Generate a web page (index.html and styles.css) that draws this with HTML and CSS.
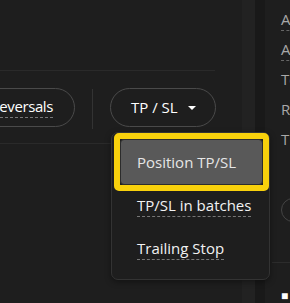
FILE: index.html
```html
<!DOCTYPE html>
<html lang="en">
<head>
    <meta charset="UTF-8">
    <meta name="viewport" content="width=device-width, initial-scale=1.0">
    <title>TP / SL</title>
    <link rel="stylesheet" href="styles.css">
</head>
<body>
    <div class="main">
        <div class="chart"></div>
        <div class="toolbar">
            <button class="pill pill_rev"><span class="dash">Reversals</span></button>
            <span class="vline"></span>
            <button class="pill pill_tpsl">TP / SL<span class="caret"></span></button>
        </div>

        <!-- 드롭다운 메뉴 -->
        <div class="menu">
            <div class="mark">
                <div class="item on">Position TP/SL</div>
            </div>
            <div class="item"><span class="dash">TP/SL in batches</span></div>
            <div class="item"><span class="dash">Trailing Stop</span></div>
        </div>
    </div>
    <div class="scroll"></div>
    <div class="gutter"></div>
    <div class="side">
        <ul class="info">
            <li><span class="dash">Avbl</span></li>
            <li><span class="dash">Assets</span></li>
            <li>Total</li>
            <li>Risk</li>
            <li>TP/SL</li>
        </ul>
        <div class="radio"></div>
        <div class="sline"></div>
        <div class="bottom">■</div>
    </div>
</body>
</html>
```

FILE: styles.css
```css
*{ margin: 0; padding: 0; box-sizing: border-box;}
ol,ul,li{ list-style: none;}

body{ width: 290px; height: 303px; overflow: hidden; display: flex; background-color: #1e1e1e; font-family: "Open Sans", "Noto Sans", sans-serif; color: #f0f0f0;}

.main{ width: 242px; flex-shrink: 0; position: relative;}
.chart{ width: 215px; height: 71px; border-bottom: 1px solid #2a2a2a;}
.toolbar{ height: 73px; display: flex; align-items: center; border-bottom: 1px solid #2a2a2a;}

.pill{ height: 39px; border: 1px solid #4a4a4a; border-radius: 20px; background: none; color: #fff; font-family: inherit; font-size: 15px; display: flex; align-items: center; flex-shrink: 0;}
.pill_rev{ width: 105px; margin-left: -30px; padding-right: 21px; justify-content: flex-end; white-space: nowrap; letter-spacing: -0.4px;}
.pill_tpsl{ width: 106px; padding-left: 20px;}
.caret{ width: 0; height: 0; margin-left: 10px; margin-top: 2px; border-left: 4px solid transparent; border-right: 4px solid transparent; border-top: 4px solid #fff;}
.vline{ width: 1px; height: 40px; margin: 4px 17px 0 17px; background-color: #333; flex-shrink: 0;}

.dash{ border-bottom: 1px dashed #777; padding-bottom: 1px;}

.menu{ position: absolute; left: 111px; top: 132px; width: 159px; height: 148px; padding-left: 2px; border: 1px solid #333; border-radius: 7px; background-color: #1e1e1e; box-shadow: 0 2px 6px rgba(0,0,0,.4);}
.mark{ border: 6px solid #f8d10c; border-radius: 5px; background-color: #1e1e1e;}
.menu .item{ height: 28px; line-height: 28px; padding-left: 23px; font-size: 15px; color: #f2f2f2;}
.menu .item + .item{ margin-top: 15px;}
.menu .item.on{ height: 46px; line-height: 44px; padding-left: 16px; border: 1px solid #2c2c2c; border-radius: 4px; background-color: #595959; color: #e6e6e6;}

.scroll{ width: 13px; flex-shrink: 0; background-color: #222;}
.gutter{ width: 10px; flex-shrink: 0; background-color: #191919;}
.side{ flex: 1; min-width: 0; padding: 4px 0 0 16px; white-space: nowrap; overflow: hidden;}
.info li{ height: 30px; line-height: 30px; font-size: 15px; color: #a8a8a8;}
.info .dash{ border-bottom-color: #666;}
.radio{ width: 24px; height: 24px; margin-top: 44px; border: 1px solid #444; border-radius: 50%;}
.sline{ height: 1px; margin: 40px 0 0 -9px; background-color: #2c2c2c;}
.bottom{ margin-top: 24px; font-size: 12px; color: #fff;}
```
